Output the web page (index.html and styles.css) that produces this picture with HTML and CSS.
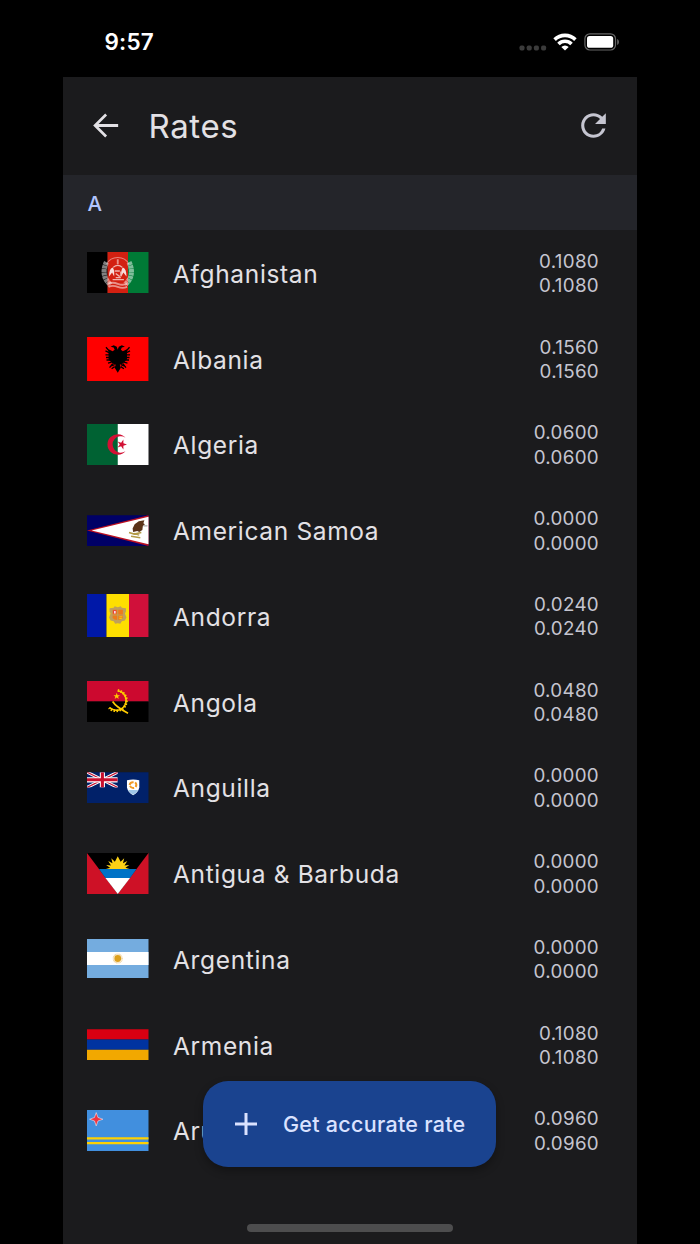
FILE: index.html
```html
<!DOCTYPE html>
<html lang="en">
<head>
    <meta charset="UTF-8">
    <meta name="viewport" content="width=device-width, initial-scale=1.0">
    <title>Rates</title>
    <link rel="stylesheet" href="styles.css">
</head>
<body>
    <div class="status-bar">
        <span class="clock">9:57</span>
        <div class="status-icons">
            <svg class="signal" width="28" height="6" viewBox="0 0 28 6" fill="#3b3b3b">
                <rect x="0.5" y="0.5" width="5" height="5" rx="1.7"/>
                <rect x="7.7" y="0.5" width="5" height="5" rx="1.7"/>
                <rect x="14.9" y="0.5" width="5" height="5" rx="1.7"/>
                <rect x="22.1" y="0.5" width="5" height="5" rx="1.7"/>
            </svg>
            <svg class="wifi" width="24" height="18" viewBox="0 0 24 18">
                <g fill="none" stroke="#fff" stroke-width="3.6">
                    <path d="M1.6 6.6a14.8 14.8 0 0 1 20.8 0"/>
                    <path d="M5.5 10.9a9.2 9.2 0 0 1 13 0"/>
                </g>
                <path d="M8.3 14a5.3 5.3 0 0 1 7.400 0L12 17.600z" fill="#fff"/>
            </svg>
            <svg class="battery" width="36" height="18" viewBox="0 0 36 18">
                <rect x="0.9" y="0.8" width="30.6" height="16.2" rx="5" fill="none" stroke="#666" stroke-width="1.2"/>
                <rect x="3" y="3" width="26.2" height="11.8" rx="2.6" fill="#fff"/>
                <path d="M33.2 6v6c2.3-.9 2.3-5.1 0-6z" fill="#666"/>
            </svg>
        </div>
    </div>

    <div class="app">
        <div class="app-bar">
            <svg class="back" width="37" height="37" viewBox="0 0 24 24" fill="#e3e1e5">
                <path d="M20.200 11.100H7.500l5.500-5.600L11.800 4.200 4 12l7.800 7.800 1.200-1.300-5.500-5.600h12.700z"/>
            </svg>
            <h1>Rates</h1>
            <svg class="refresh" width="37" height="37" viewBox="0 0 24 24" fill="#c5c5d0">
                <path d="M17.65 6.35A7.958 7.958 0 0 0 12 4c-4.420 0-7.990 3.580-7.990 8s3.570 8 7.990 8c3.730 0 6.840-2.550 7.730-6h-2.080A5.990 5.990 0 0 1 12 18c-3.310 0-6-2.690-6-6s2.690-6 6-6c1.660 0 3.140.69 4.220 1.780L13 11h7V4z"/>
            </svg>
        </div>

        <div class="section">A</div>

        <div class="list">
            <div class="row">
                <div class="flag">
                    <svg width="61.5" height="41" viewBox="0 0 60 40">
                        <path d="M0 0h20v40H0z"/>
                        <path d="M20 0h20v40H20z" fill="#d32011"/>
                        <path d="M40 0h20v40H40z" fill="#007a36"/>
                        <g fill="none" stroke="#fff">
                            <path d="M19 10c-4 8-3 16 4 22M41 10c4 8 3 16-4 22" stroke-width="5" stroke-opacity=".5" stroke-dasharray="3 .4"/>
                            <path d="M19 12a12.500 12.500 0 0 1 22 0" stroke-opacity=".45"/>
                            <path d="M25.500 15q4.500-4 9 0M27 18.500h5M28 21l4 3M28 25h5M33 19v5M25 27h11" stroke-width="1.300" stroke-opacity=".65"/>
                            <path d="M21 31q4-2 9 0t9 0M21 34q4-2 9 0t9 0M30 7v5" stroke-width="1.800" stroke-opacity=".5"/>
                        </g>
                        <path d="M21.500 24q0-8 3.500-9 2 2 1.500 9l-2-4zM38.500 24q0-8-3.500-9-2 2-1.500 9l2-4z" fill="#fff" fill-opacity=".85"/>
                    </svg>
                </div>
                <span class="country">Afghanistan</span>
                <div class="rates"><span>0.1080</span><span>0.1080</span></div>
            </div>
            <div class="row">
                <div class="flag">
                    <svg width="61.5" height="44" viewBox="0 0 60 43">
                        <path d="M0 0h60v43H0z" fill="#f00"/>
                        <path d="M30 12.500l-1-3-3-1.500-3 1.500 3 .8 1 2.200-2 1.500-4-2v10l4 4 3 1-1 3 3 5 3-5-1-3 3-1 4-4v-10l-4 2-2-1.500 1-2.200 3-.8-3-1.500-3 1.500z"/>
                        <path d="M22 14l-3.500-4M22 15.500l-4-2M22 17.500h-4M22 20h-3.500M22.500 22.500H19M24 24.500l-3.500 1M25 26l-3 4M27 27l-4 1.500M27 29l-3 2M38 14l3.500-4M38 15.500l4-2M38 17.500h4M38 20h3.500M37.500 22.500H41M36 24.500l3.500 1M35 26l3 4M33 27l4 1.500M33 29l3 2" stroke="#000" stroke-width="1.300"/>
                    </svg>
                </div>
                <span class="country">Albania</span>
                <div class="rates"><span>0.1560</span><span>0.1560</span></div>
            </div>
            <div class="row">
                <div class="flag">
                    <svg width="61.5" height="41" viewBox="0 0 60 40">
                        <path d="M0 0h60v40H0z" fill="#fff"/>
                        <path d="M0 0h30v40H0z" fill="#006233"/>
                        <path d="M37.500 13.400a10 10 0 1 0 0 13.200 8 8 0 1 1 0-13.200z" fill="#d21034"/>
                        <path d="M39 20l-3.500 1.200v3.600l-2.200-3-3.500 1.200L32 20l-2.200-3 3.500 1.200 2.200-3v3.600z" fill="#d21034"/>
                    </svg>
                </div>
                <span class="country">Algeria</span>
                <div class="rates"><span>0.0600</span><span>0.0600</span></div>
            </div>
            <div class="row">
                <div class="flag">
                    <svg width="61.5" height="31" viewBox="0 0 60 30">
                        <path d="M0 0h60v30H0z" fill="#006"/>
                        <path d="M0 15L60 0v30z" fill="#bd1021"/>
                        <path d="M4.500 15L60 1.700v26.600z" fill="#fff"/>
                        <path d="M44.500 13l2-4 4-3 5.500-1-1 3 1.500 1-2 1.500-.5 4-3 2-2-1-4 1z" fill="#5a3319"/>
                        <path d="M55 10.500h4" stroke="#999" stroke-width="1"/>
                        <path d="M41 17l5 1.500 7-1.500M43 20.500l9 1.500M46 18l5 1.500" stroke="#b39a45" stroke-width="1.500" fill="none"/>
                    </svg>
                </div>
                <span class="country">American Samoa</span>
                <div class="rates"><span>0.0000</span><span>0.0000</span></div>
            </div>
            <div class="row">
                <div class="flag">
                    <svg width="61.5" height="43" viewBox="0 0 60 42">
                        <path d="M0 0h19v42H0z" fill="#0018a8"/>
                        <path d="M19 0h22v42H19z" fill="#fedf00"/>
                        <path d="M41 0h19v42H41z" fill="#d0103a"/>
                        <path d="M22 14l4-.5 1-1.500 3 1 3-1 1 1.500 4 .5v3l-1 2 1.500 4-1.500 3-3 .5-1.500 2.500-2.500-.5-2.500.5-1.500-2.500-3-.5-1.500-3L23 19l-1-2z" fill="#c0a05a"/>
                        <path d="M25 15.500h4.500V20H25zM30.500 15.500H35V20h-4.500zM25 21h4.500v4.500q-3 0-4.500-2zM30.500 21H35v2.500q-2 2-4.500 2z" fill="#ee7a1c"/>
                        <path d="M25.500 16h3v3h-3z" fill="#e5304a"/>
                        <path d="M26.500 16.500h1.400V19h-1.400z" fill="#fff"/>
                        <path d="M31.500 22.300h3M31.500 24h2.500" stroke="#fedf00" stroke-width=".8"/>
                    </svg>
                </div>
                <span class="country">Andorra</span>
                <div class="rates"><span>0.0240</span><span>0.0240</span></div>
            </div>
            <div class="row">
                <div class="flag">
                    <svg width="61.5" height="41" viewBox="0 0 60 40">
                        <path d="M0 0h60v20H0z" fill="#cc092f"/>
                        <path d="M0 20h60v20H0z"/>
                        <path d="M30 9.500a9.600 9.600 0 1 1-8 16.500" fill="none" stroke="#ffcb00" stroke-width="1.500"/>
                        <path d="M30 9.200a10 10 0 1 1-8.500 17" fill="none" stroke="#ffcb00" stroke-width="2.600" stroke-dasharray="1.400 1.400"/>
                        <path d="M25 20q3 5 15 11.500" fill="none" stroke="#ffcb00" stroke-width="1.600"/>
                        <path d="M29 11.500l.8 2.300h2.400l-1.900 1.500.7 2.300-2-1.400-2 1.400.7-2.300-1.900-1.500h2.400z" fill="#ffcb00"/>
                    </svg>
                </div>
                <span class="country">Angola</span>
                <div class="rates"><span>0.0480</span><span>0.0480</span></div>
            </div>
            <div class="row">
                <div class="flag">
                    <svg width="61.5" height="31" viewBox="0 0 60 30">
                        <path d="M0 0h60v30H0z" fill="#012169"/>
                        <svg width="30" height="15" viewBox="0 0 30 15">
                            <path d="M0 0l30 15M30 0L0 15" stroke="#fff" stroke-width="3"/>
                            <path d="M0 0l30 15M30 0L0 15" stroke="#c8102e" stroke-width="1.100"/>
                            <path d="M15 0v15M0 7.500h30" stroke="#fff" stroke-width="5"/>
                            <path d="M15 0v15M0 7.500h30" stroke="#c8102e" stroke-width="3"/>
                        </svg>
                        <path d="M39 8q6-1.500 12 0v7q-1 5-6 7.500-5-2.500-6-7.500z" fill="#fff"/>
                        <path d="M40 17.500h10q-1.500 3-5 4.500-3.500-1.500-5-4.500z" fill="#9fc6e8"/>
                        <path d="M41.500 12.500q1-3 4-2.500M47 10q2 2 .5 4.500M46 15.500q-3 .5-4-2" fill="none" stroke="#f29a24" stroke-width="1.900"/>
                    </svg>
                </div>
                <span class="country">Anguilla</span>
                <div class="rates"><span>0.0000</span><span>0.0000</span></div>
            </div>
            <div class="row">
                <div class="flag">
                    <svg width="61.5" height="41" viewBox="0 0 60 40">
                        <path d="M0 0h60v40H0z" fill="#ce1126"/>
                        <path d="M0 0h60L30 40z"/>
                        <path d="M18.500 15.700l4-1.200-3.800-2.700 4.700.3-2.700-4.300 4.200 2.300-1.200-5 3.500 3.500L30 3.200l2.800 5.400 3.500-3.500-1.200 5 4.200-2.300-2.700 4.300 4.700-.3-3.800 2.700 4 1.200z" fill="#fcd116"/>
                        <path d="M11.700 15.600h36.600L42 24.500H18z" fill="#0072c6"/>
                        <path d="M18 24.300h24L30 40z" fill="#fff"/>
                    </svg>
                </div>
                <span class="country">Antigua &amp; Barbuda</span>
                <div class="rates"><span>0.0000</span><span>0.0000</span></div>
            </div>
            <div class="row">
                <div class="flag">
                    <svg width="61.5" height="39" viewBox="0 0 60 38">
                        <path d="M0 0h60v38H0z" fill="#74acdf"/>
                        <path d="M0 12.700h60v12.600H0z" fill="#fff"/>
                        <circle cx="30" cy="19" r="4.200" fill="none" stroke="#efd3a0" stroke-width="1.500" stroke-dasharray=".8 .4"/>
                        <circle cx="30" cy="19" r="3.300" fill="#dca01e"/>
                    </svg>
                </div>
                <span class="country">Argentina</span>
                <div class="rates"><span>0.0000</span><span>0.0000</span></div>
            </div>
            <div class="row">
                <div class="flag">
                    <svg width="61.5" height="31" viewBox="0 0 60 30">
                        <path d="M0 0h60v10H0z" fill="#d90012"/>
                        <path d="M0 10h60v10H0z" fill="#0033a0"/>
                        <path d="M0 20h60v10H0z" fill="#f2a800"/>
                    </svg>
                </div>
                <span class="country">Armenia</span>
                <div class="rates"><span>0.1080</span><span>0.1080</span></div>
            </div>
            <div class="row">
                <div class="flag">
                    <svg width="61.5" height="41" viewBox="0 0 60 40">
                        <path d="M0 0h60v40H0z" fill="#418fde"/>
                        <path d="M0 27.700h60M0 32.200h60" stroke="#ffd100" stroke-width="2.200"/>
                        <path d="M9 2.500l1.700 4.800L15.500 9l-4.800 1.700L9 15.500l-1.700-4.800L2.500 9l4.800-1.700z" fill="#ef3340" stroke="#fff" stroke-width=".5"/>
                    </svg>
                </div>
                <span class="country">Aruba</span>
                <div class="rates"><span>0.0960</span><span>0.0960</span></div>
            </div>
        </div>

        <button class="fab">
            <svg width="24" height="24" viewBox="0 0 24 24"><path d="M12 1v22M1 12h22" stroke="#dae2ff" stroke-width="3"/></svg>
            <span>Get accurate rate</span>
        </button>
        <div class="home-indicator"></div>
    </div>
</body>
</html>
```

FILE: styles.css
```css
* {
    margin: 0;
    padding: 0;
    box-sizing: border-box;
}

body {
    width: 700px;
    height: 1244px;
    padding: 0 63.5px 0 63px;
    background: #000;
    font-family: Inter, Roboto, sans-serif;
    overflow: hidden;
}

.status-bar {
    height: 77px;
    padding: 6px 17px 0 41.5px;
    display: flex;
    align-items: center;
    justify-content: space-between;
}

.clock {
    color: #fff;
    font-size: 22.5px;
    font-weight: 600;
    letter-spacing: 0.2px;
}

.status-icons {
    display: flex;
    align-items: center;
}

.signal {
    margin: 12px 6px 0 0;
}

.wifi {
    margin-right: 7px;
}

.app {
    position: relative;
    height: 1167px;
    background: #1b1b1d;
}

.app-bar {
    height: 98px;
    padding: 0 25px 1px 24px;
    display: flex;
    align-items: center;
}

.app-bar h1 {
    flex: 1;
    margin-left: 24.5px;
    color: #e3e1e5;
    font-size: 33px;
    font-weight: 400;
    letter-spacing: 0.6px;
}

.section {
    height: 55px;
    padding-left: 24.5px;
    background: #24252a;
    color: #b1c5ff;
    font-size: 20.5px;
    font-weight: 500;
    line-height: 58px;
}

.row {
    height: 85.75px;
    padding: 0 37.5px 0 24px;
    display: flex;
    align-items: center;
}

.flag {
    width: 61.5px;
    margin-right: 24.5px;
}

.flag svg {
    display: block;
}

.country {
    flex: 1;
    padding-top: 2px;
    color: #e3e1e5;
    font-size: 24.5px;
    letter-spacing: 0.65px;
}

.rates {
    padding-top: 3px;
    display: flex;
    flex-direction: column;
    align-items: flex-end;
    color: #c5c5d0;
    font-size: 18.8px;
    line-height: 24.5px;
    letter-spacing: 0.3px;
}

.fab {
    position: absolute;
    left: 140px;
    top: 1004px;
    width: 293px;
    height: 86px;
    padding-left: 31px;
    display: flex;
    align-items: center;
    gap: 25px;
    border: none;
    border-radius: 25px;
    background: #1a438f;
    box-shadow: 0 4px 8px rgba(0, 0, 0, 0.3);
    color: #dae2ff;
    font-family: inherit;
    font-size: 21.5px;
    font-weight: 500;
    letter-spacing: 0.28px;
    white-space: nowrap;
}

.home-indicator {
    position: absolute;
    left: 184px;
    bottom: 12px;
    width: 206px;
    height: 8px;
    border-radius: 4px;
    background: #4d4d4e;
}
```
